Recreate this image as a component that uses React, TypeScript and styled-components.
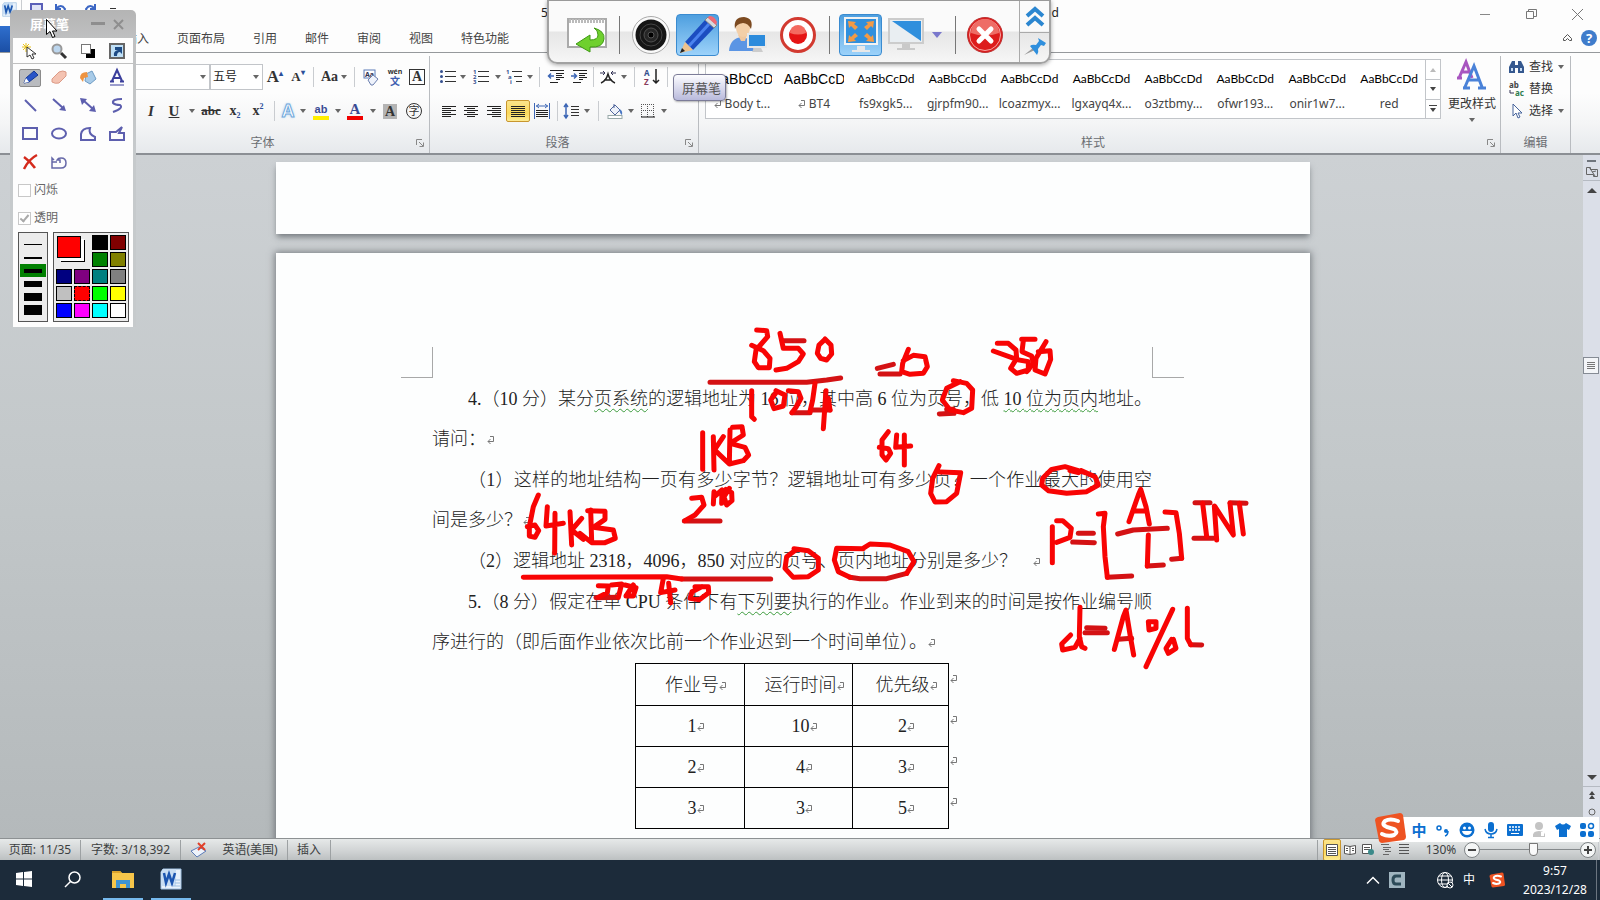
import React from 'react';
import styled, { createGlobalStyle, css } from 'styled-components';

const Global = createGlobalStyle`
  *, *::before, *::after { box-sizing: border-box; }
  body { margin: 0; }
  button, input, select { font: inherit; color: inherit; margin: 0; padding: 0; }
  svg { display: block; flex: none; overflow: visible; }
`;

/* ---------- shell ---------- */
const Shell = styled.div`
  position: relative;
  display: flex;
  flex-direction: column;
  height: 100vh;
  overflow: hidden;
  background: #fdfdfd;
  color: #333;
  font: 12px/16px "Noto Sans", "Noto Sans CJK SC", sans-serif;
`;

/* ---------- title bar ---------- */
const TitleBar = styled.header`
  display: grid;
  grid-template-columns: 1fr 518px 1fr;
  align-items: start;
  height: 26px;
  flex: none;
`;
const QuickBar = styled.div`
  display: flex;
  align-items: center;
  height: 18px;
  padding-left: 1px;
`;
const QuickSlot = styled.button<{ $w: number }>`
  display: flex;
  justify-content: center;
  width: ${p => p.$w}px;
  border: 0;
  background: none;
`;
const Title = styled.div`
  display: flex;
  justify-content: space-between;
  padding-top: 5px;
  color: #222;
`;
const WindowButtons = styled.div`
  display: flex;
  justify-content: flex-end;
  padding-top: 4px;
`;
const WinButton = styled.button`
  display: flex;
  align-items: center;
  justify-content: center;
  width: 46px;
  height: 20px;
  border: 0;
  background: none;
`;

/* ---------- ribbon tabs ---------- */
const TabRow = styled.nav`
  display: flex;
  align-items: stretch;
  height: 27px;
  flex: none;
  border-bottom: 1px solid #96999c;
`;
const FileTab = styled.button`
  width: 56px;
  margin-right: 55px;
  border: 0;
  background: linear-gradient(#2f6fce, #1b4fa5);
`;
const Tab = styled.button`
  padding: 0 14px;
  border: 0;
  background: none;
  color: #444;
`;
const TabTail = styled.div`
  display: flex;
  align-items: center;
  gap: 9px;
  margin-left: auto;
  padding: 0 3px 2px 0;
`;
const IconButton = styled.button`
  display: flex;
  align-items: center;
  justify-content: center;
  border: 0;
  background: none;
`;

/* ---------- ribbon ---------- */
const Ribbon = styled.div`
  display: flex;
  height: 102px;
  flex: none;
  padding-top: 3px;
  border-bottom: 2px solid #8b8f94;
  background: linear-gradient(#fdfdfd 40%, #f4f5f6 70%, #e6e9ec);
`;
const Group = styled.section<{ $w?: number }>`
  display: flex;
  flex-direction: column;
  ${p => (p.$w ? `width: ${p.$w}px; flex: none;` : 'flex: 1; min-width: 0;')}
  border-right: 1px solid #b9bcc0;
`;
const GroupBody = styled.div<{ $pad?: number }>`
  flex: 1;
  padding-left: ${p => p.$pad || 0}px;
`;
const GroupFoot = styled.div<{ $launcher?: boolean }>`
  display: flex;
  align-items: center;
  height: 20px;
  padding-right: ${p => (p.$launcher ? 5 : 0)}px;
  color: #6a6d72;
  span { flex: 1; text-align: center; }
`;
const ToolRow = styled.div`
  display: flex;
  align-items: center;
  height: 34px;
  padding-top: 8px;
`;
const Tool = styled.button<{ $w: number; $on?: boolean }>`
  display: flex;
  align-items: center;
  justify-content: center;
  width: ${p => p.$w}px;
  height: 22px;
  border: 0;
  background: none;
  color: #333;
  ${p => p.$on && css`
    border: 1px solid #c8962f;
    border-radius: 2px;
    background: linear-gradient(#fbe48c, #fbd95c 60%, #fdeb94);
  `}
`;
const Split = styled.i<{ $w: number }>`
  width: ${p => p.$w}px;
  height: 20px;
  background: linear-gradient(#c9ccd0, #c9ccd0) center / 1px 100% no-repeat;
`;
const Combo = styled.span<{ $w: number }>`
  display: flex;
  align-items: center;
  width: ${p => p.$w}px;
  height: 26px;
  border: 1px solid #c2c5c9;
  background: #fff;
  select {
    flex: 1;
    min-width: 0;
    padding-left: 2px;
    border: 0;
    background: none;
    appearance: none;
    color: #222;
  }
  svg { margin-right: 3px; }
`;
const Glyph = styled.span<{ $size: number; $sans?: boolean }>`
  font: bold ${p => p.$size}px/20px ${p => (p.$sans ? '"Liberation Sans", sans-serif' : '"Liberation Serif", serif')};
  sup { font-size: 8px; line-height: 0; color: #2b4f9a; vertical-align: 6px; }
  sub { font-size: 8px; line-height: 0; color: #2b4f9a; vertical-align: -3px; }
`;
const ItalicGlyph = styled(Glyph)`font-style: italic;`;
const UnderGlyph = styled(Glyph)`text-decoration: underline;`;
const StrikeGlyph = styled(Glyph)`text-decoration: line-through;`;
const BoxGlyph = styled(Glyph)`
  width: 16px;
  height: 16px;
  line-height: 14px;
  border: 1px solid #333;
`;
const ShadeGlyph = styled(Glyph)`
  width: 14px;
  height: 15px;
  line-height: 15px;
  background: #b4b4b4;
`;
const RingGlyph = styled.span`
  width: 16px;
  height: 16px;
  border: 1px solid #333;
  border-radius: 50%;
  font-size: 11px;
  line-height: 13px;
`;
const GlowGlyph = styled(Glyph)`
  color: #fff;
  -webkit-text-stroke: 1px #6fa8dc;
  text-shadow: 0 0 3px #8fc0ea;
`;
const BarGlyph = styled(Glyph)<{ $bar: string }>`
  width: 16px;
  height: 17px;
  line-height: 12px;
  border-bottom: 4px solid ${p => p.$bar};
  color: #3a4b94;
`;
const Pinyin = styled.span`
  display: flex;
  flex-direction: column;
  align-items: center;
  font: bold 7px/7px "Noto Sans", sans-serif;
  b { font: bold 10px/11px "Noto Sans CJK SC", sans-serif; color: #3f5fb0; }
`;
const Gallery = styled.div`
  display: flex;
  flex: 1;
  min-width: 0;
  height: 60px;
  margin: 3px 3px 0 6px;
  border: 1px solid #c2c5c9;
  background: #fff;
`;
const GalleryItem = styled.button`
  display: flex;
  flex: 1;
  min-width: 0;
  flex-direction: column;
  align-items: center;
  padding-top: 10px;
  gap: 8px;
  border: 0;
  background: none;
`;
const Preview = styled.span<{ $arial?: boolean }>`
  width: 60px;
  white-space: nowrap;
  color: #000;
  font: ${p => (p.$arial ? '14px/18px "Liberation Sans"' : '12px/18px Lato')}, sans-serif;
  ${p => (p.$arial ? 'overflow: hidden;' : 'text-align: center;')}
`;
const StyleName = styled.span`
  display: flex;
  align-items: center;
  gap: 3px;
  color: #444;
`;
const GalleryScroll = styled.div`
  display: grid;
  grid-template-rows: repeat(3, 1fr);
  width: 15px;
  border-left: 1px solid #c2c5c9;
  button + button { border-top: 1px solid #c2c5c9; }
`;
const StylesBody = styled.div`
  display: flex;
  flex: 1;
`;
const ChangeStyles = styled.button`
  display: flex;
  flex-direction: column;
  align-items: center;
  width: 56px;
  padding-top: 4px;
  border: 0;
  background: none;
  gap: 6px;
  white-space: nowrap;
`;
const EditTool = styled.button`
  display: flex;
  align-items: center;
  gap: 5px;
  height: 22px;
  padding-left: 8px;
  border: 0;
  background: none;
`;
const RibbonEnd = styled.div`width: 29px; flex: none;`;

/* ---------- document area ---------- */
const Work = styled.main`
  display: flex;
  flex: 1;
  min-height: 0;
  background: linear-gradient(#cdd1d4, #c3c8ca 45%, #b4b9bb);
`;
const Canvas = styled.div`
  display: flex;
  flex: 1;
  min-width: 0;
  flex-direction: column;
  align-items: center;
  gap: 19px;
  padding: 7px 0 0 3px;
  overflow: hidden;
`;
const Paper = styled.article<{ $tail?: boolean }>`
  position: relative;
  flex: none;
  width: 1034px;
  min-height: ${p => (p.$tail ? 72 : 1200)}px;
  padding: ${p => (p.$tail ? '0' : '94px 158px 0 156px')};
  background: #fdfefe;
  box-shadow: ${p => (p.$tail ? '0 4px 6px -1px' : '0 0 7px 1px')} rgba(60, 66, 72, .6);
`;
const CropMarks = styled.div`
  display: flex;
  justify-content: space-between;
  height: 31px;
  margin: 0 -32px 1px -31px;
`;
const Corner = styled.i<{ $right?: boolean }>`
  width: 32px;
  border: 0 solid #a8a8a8;
  border-bottom-width: 1px;
  ${p => (p.$right ? 'border-left-width: 1px;' : 'border-right-width: 1px;')}
`;
const Para = styled.p`
  margin: 0 0 1px;
  color: #222;
  font: 300 18px/40px "Liberation Serif", "Noto Sans CJK SC", serif;
`;
const Line = styled.span<{ $indent?: boolean; $full?: boolean }>`
  display: block;
  white-space: nowrap;
  padding-left: ${p => (p.$indent ? 36 : 0)}px;
  ${p => p.$full && 'text-align-last: justify;'}
`;
const Wavy = styled.span`
  text-decoration: underline wavy #3c9b3c 1px;
  text-underline-offset: 3px;
`;
const ReturnSvg = styled.svg<{ $gap?: number }>`
  display: inline-block;
  margin-left: ${p => p.$gap || 0}px;
`;
const JobTable = styled.table`
  margin: 0 0 0 203px;
  border-collapse: collapse;
  color: #222;
  font: 300 18px/40px "Liberation Serif", "Noto Sans CJK SC", serif;
  th { font-weight: 300; height: 42px; }
  td { height: 41px; }
  th, td { padding: 0 0 0 12px; border: 1px solid #000; text-align: center; }
  th:nth-child(1) { width: 109px; }
  th:nth-child(2) { width: 108px; }
  th:nth-child(3) { width: 96px; }
`;
const RowEnd = styled.td`
  && { padding: 0 0 14px 1px; border: 0; line-height: 20px; }
`;
const Ink = styled.svg`
  position: absolute;
  left: 0;
  top: 0;
  pointer-events: none;
  fill: none;
  stroke-width: 15;
  stroke-linecap: round;
  stroke-linejoin: round;
`;

/* ---------- scroll bar ---------- */
const ScrollBar = styled.div`
  display: flex;
  flex-direction: column;
  align-items: center;
  width: 17px;
  padding-top: 5px;
  background: #dbdfe8;
`;
const ScrollPart = styled.button<{ $h: number; $line?: boolean }>`
  display: flex;
  align-items: center;
  justify-content: center;
  width: 17px;
  height: ${p => p.$h}px;
  flex: none;
  border: 0;
  border-bottom: ${p => (p.$line ? '1px solid #b5bac2' : '0')};
  background: none;
`;
const Track = styled.div`
  flex: 1;
  width: 17px;
  padding-top: 158px;
`;
const Thumb = styled.button`
  display: flex;
  align-items: center;
  justify-content: center;
  width: 16px;
  height: 17px;
  border: 1px solid #858b94;
  background: #f3f5f8;
`;

/* ---------- status bar ---------- */
const StatusBar = styled.footer`
  display: flex;
  align-items: center;
  height: 22px;
  flex: none;
  border-top: 1px solid #8d9193;
  background: linear-gradient(#e6e9e9, #cfd2d3 60%, #bcc0c1);
  color: #3c3f41;
`;
const StatusItem = styled.button<{ $w: number }>`
  display: flex;
  align-items: center;
  justify-content: center;
  gap: 15px;
  width: ${p => p.$w}px;
  height: 20px;
  border: 0;
  border-right: 1px solid #9da1a3;
  background: none;
  white-space: nowrap;
`;
const StatusRight = styled.div`
  display: flex;
  align-items: center;
  margin-left: auto;
  padding-left: 5px;
  height: 20px;
  border-left: 1px solid #9da1a3;
`;
const ZoomText = styled.span`
  width: 46px;
  text-align: center;
  margin-left: 5px;
`;
const RoundButton = styled.button`
  display: flex;
  align-items: center;
  justify-content: center;
  width: 16px;
  height: 16px;
  border: 1px solid #7e8385;
  border-radius: 50%;
  background: #f4f6f6;
`;
const ZoomRange = styled.input`
  width: 100px;
  height: 16px;
  appearance: none;
  background: linear-gradient(#85898b, #85898b) center / 100% 1px no-repeat;
  &::-webkit-slider-thumb {
    appearance: none;
    width: 9px;
    height: 13px;
    border: 1px solid #777;
    border-radius: 1px 1px 5px 5px;
    background: #fafafa;
  }
`;

/* ---------- task bar ---------- */
const TaskBar = styled.div`
  display: flex;
  height: 40px;
  flex: none;
  background: #1c2b3a;
  color: #fff;
`;
const TaskButton = styled.button<{ $open?: boolean }>`
  display: flex;
  align-items: center;
  justify-content: center;
  width: 40px;
  margin: 0 4px;
  border: 0;
  border-bottom: 2px solid ${p => (p.$open ? '#76b9ed' : 'transparent')};
  background: none;
`;
const SearchButton = styled(TaskButton)`margin-right: 7px;`;
const Tray = styled.div`
  display: flex;
  align-items: center;
  margin-left: auto;
`;
const TrayItem = styled.button<{ $w: number }>`
  display: flex;
  align-items: center;
  justify-content: center;
  width: ${p => p.$w}px;
  height: 40px;
  border: 0;
  background: none;
`;
const Clock = styled.time`
  width: 82px;
  text-align: center;
  line-height: 19px;
`;
const PeekButton = styled.button`
  width: 4px;
  height: 40px;
  border: 0;
  border-left: 1px solid #6b7580;
  background: none;
`;

/* ---------- floating pieces ---------- */
const Palette = styled.aside`
  position: absolute;
  left: 10px;
  top: 10px;
  width: 126px;
  padding: 0 3px;
  border-radius: 5px 5px 0 0;
  background: linear-gradient(#b4b4b4, #bfc0c1 28px, #c6cacc 145px);
`;
const PaletteHead = styled.div`
  display: flex;
  align-items: center;
  height: 28px;
  padding: 0 4px 0 17px;
  color: #fff;
  font-size: 13px;
  font-weight: bold;
  button { width: 21px; height: 20px; }
  span { flex: 1; }
`;
const PaletteBody = styled.div`
  padding: 0 0 5px;
  background: #fdfdfd;
`;
const PenGrid = styled.div<{ $first?: boolean }>`
  display: grid;
  grid-template-columns: repeat(4, 29px);
  grid-auto-rows: ${p => (p.$first ? 25 : 28)}px;
  padding-left: 2px;
  ${p => p.$first && 'border-bottom: 1px solid #c0c0c0;'}
`;
const PenTool = styled.button<{ $on?: boolean }>`
  display: flex;
  align-items: center;
  justify-content: center;
  align-self: center;
  justify-self: center;
  width: 22px;
  height: 18px;
  border: 1px solid ${p => (p.$on ? '#8b8b8b' : 'transparent')};
  border-radius: 2px;
  background: ${p => (p.$on ? '#b9bbbf' : 'none')};
`;
const Check = styled.label`
  display: flex;
  align-items: center;
  gap: 3px;
  height: 28px;
  padding-left: 5px;
  color: #666;
  input {
    width: 13px;
    height: 13px;
    border: 1px solid #c8c8c8;
    appearance: none;
    background: #fff;
  }
  input:checked::after {
    content: '';
    display: block;
    width: 5px;
    height: 9px;
    margin: 0 0 0 3px;
    border: solid #aaa;
    border-width: 0 2px 2px 0;
    transform: rotate(40deg);
  }
`;
const Boxes = styled.div`
  display: flex;
  gap: 5px;
  padding: 0 4px 0 5px;
`;
const Widths = styled.div`
  display: grid;
  flex: none;
  grid-template-rows: repeat(6, 13px);
  width: 30px;
  padding: 5px 1px;
  border: 1px solid #555;
  background: #ececec;
`;
const WidthOption = styled.button<{ $t: number; $on?: boolean }>`
  border: 0;
  background: linear-gradient(#000, #000) center / 18px ${p => p.$t}px no-repeat ${p => (p.$on ? ', #008000' : '')};
`;
const Swatches = styled.div`
  display: grid;
  grid-template-columns: repeat(4, 16px);
  grid-auto-rows: 15px;
  gap: 2px;
  padding: 2px;
  border: 1px solid #555;
  background: #ececec;
`;
const Swatch = styled.button<{ $c: string; $dash?: boolean }>`
  border: 1px ${p => (p.$dash ? 'dashed' : 'solid')} #000;
  background: ${p => p.$c};
`;
const Current = styled.div`
  grid-column: span 2;
  grid-row: span 2;
  width: 24px;
  height: 22px;
  margin: 1px;
  border: 1px solid #000;
  background: #f00;
  box-shadow: 3px 3px 0 #fff, 4px 4px 0 #000;
`;
const Pointer = styled.svg`
  position: absolute;
  left: 46px;
  top: 19px;
`;
const Dock = styled.div`
  position: absolute;
  top: 0;
  left: calc(50% - 253px);
  display: flex;
  width: 504px;
  height: 64px;
  border: 2px solid #a2a2a2;
  border-top: 1px solid #999;
  border-radius: 0 0 10px 10px;
  background: linear-gradient(#fafafa 30px, #e6e6e6 31px, #f6f6f6);
  box-shadow: 0 1px 4px rgba(0, 0, 0, .35);
`;
const DockMain = styled.div`
  display: flex;
  flex: 1;
  align-items: center;
  padding: 7px 0 0 13px;
`;
const DockButton = styled.button<{ $w: number; $on?: boolean }>`
  display: flex;
  align-items: center;
  justify-content: center;
  width: ${p => p.$w}px;
  height: 42px;
  border: 0;
  background: none;
  ${p => p.$on && css`
    border: 1px solid #3a8bd0;
    border-radius: 4px;
    background: linear-gradient(#4e9fdf, #9cd2fa);
  `}
`;
const ScreenButton = styled(DockButton)`gap: 8px;`;
const DockSplit = styled.i<{ $w: number }>`
  width: ${p => p.$w}px;
  height: 38px;
  background: linear-gradient(#777, #777) center / 1px 100% no-repeat;
`;
const DockSide = styled.div`
  display: grid;
  grid-template-rows: 1fr 1fr;
  width: 30px;
  border-left: 1px solid #aaa;
  button + button { border-top: 1px solid #aaa; }
`;
const Tip = styled.div`
  position: absolute;
  left: calc(50% - 127px);
  top: 74px;
  width: 53px;
  height: 27px;
  padding-left: 8px;
  border: 1px solid #7c7c98;
  border-radius: 4px;
  background: linear-gradient(#fdfdff, #b9badc);
  box-shadow: 1px 1px 2px rgba(0, 0, 0, .3);
  color: #555;
  font-size: 13px;
  line-height: 27px;
  white-space: nowrap;
`;
const Ime = styled.div`
  position: absolute;
  right: 1px;
  bottom: 58px;
  display: flex;
  align-items: center;
  height: 25px;
  padding-left: 26px;
  background: #fff;
  color: #0b6fd0;
  font-weight: bold;
  font-size: 15px;
`;
const ImeButton = styled.button`
  display: flex;
  align-items: center;
  justify-content: center;
  width: 24px;
  height: 24px;
  border: 0;
  background: none;
`;
const ImeLogo = styled.svg`
  position: absolute;
  left: -7px;
  top: -5px;
`;

/* ---------- small drawings ---------- */
const Caret = ({ c = '#666' }: { c?: string }) => (
  <svg width="6" height="4" viewBox="0 0 6 4"><path d="M0 0h6L3 4z" fill={c} /></svg>
);
const Launcher = () => (
  <svg width="8" height="8" viewBox="0 0 8 8" fill="none" stroke="#888"><path d="M.5 6V.5H6M3 3l4 4M7.500 3.500v4h-4" /></svg>
);
const Return = ({ gap = 0 }: { gap?: number }) => (
  <ReturnSvg $gap={gap} width="8" height="9" viewBox="0 0 8 9" fill="none" stroke="#777">
    <path d="M3 .5h3.500v5H1M3.500 3 1 5.500 3.500 8" />
  </ReturnSvg>
);
const Lines = ({ rows, color = '#222' }: { rows: [number, number][]; color?: string }) => (
  <svg width="15" height="13" viewBox="0 0 15 13" stroke={color}>
    {rows.map(([a, b], i) => <path key={i} d={`M${a} ${i * 2 + 1.5}H${b}`} />)}
  </svg>
);
const WordLogo = ({ s }: { s: number }) => (
  <svg width={s} height={s} viewBox="0 0 22 22">
    <path d="M3 1h18v20H1V4z" fill="#e9f2fb" stroke="#9dbfe0" />
    <path d="M1 4l2-3h13v17H1z" fill="#c9def3" />
    <path d="M4 5l2 10 3-9 3 9 3-10" fill="none" stroke="#1c56b0" strokeWidth="2.500" />
    <path d="M15 12h5M15 15h5M13 18h7" stroke="#9dbfe0" />
  </svg>
);
const SLogo = ({ s }: { s: number }) => (
  <svg width={s} height={s} viewBox="0 0 32 32">
    <path d="M4 5 26 1q2 0 3 2l3 22q0 2-2 3L8 31q-2 0-3-2L1 8q0-2 3-3z" fill="#ee5322" />
    <path d="M24 9q-8-3-13 0-4 4 2 6l7 2q5 3 0 6-6 2-12-1" fill="none" stroke="#fff" strokeWidth="4" strokeLinecap="round" />
  </svg>
);
const List = ({ marks }: { marks: string[] }) => (
  <svg width="16" height="16" viewBox="0 0 16 16">
    {marks.map((m, i) => (
      <g key={i}>
        {m ? <text x={marks[1] === 'a' ? i * 2 : 0} y={i * 5 + 5} fontSize="6" fontWeight="bold" fill="#35508f">{m}</text>
          : <circle cx="1.500" cy={i * 5 + 2.500} r="1.500" fill="#35508f" />}
        <path d={`M${marks[1] === 'a' ? 6 + i * 2 : 5} ${i * 5 + 2.5}H16`} stroke="#333" />
      </g>
    ))}
  </svg>
);
const Indent = ({ out }: { out?: boolean }) => (
  <svg width="16" height="14" viewBox="0 0 16 14" stroke="#222" fill="none">
    <path d="M2 .5h14M8 3.500h8M8 5.500h6M8 7.500h8M8 9.500h4M2 12.500h8" />
    <path d={out ? 'M6 6H1M3 3.500 0.500 6 3 8.500' : 'M0 6h5M3 3.500 5.500 6 3 8.500'} stroke="#3c66b5" strokeWidth="1.500" />
  </svg>
);

const full: [number, number] = [0, 14];
const short: [number, number] = [0, 9];

const FontGroup = () => (
  <Group $w={321}>
    <GroupBody>
      <ToolRow>
        <Combo $w={101}><select aria-label="字体"><option></option></select><Caret /></Combo>
        <Combo $w={53}><select aria-label="字号"><option>五号</option></select><Caret /></Combo>
        <Tool $w={24}><Glyph $size={17}>A<sup>▴</sup></Glyph></Tool>
        <Tool $w={22}><Glyph $size={13}>A<sup>▾</sup></Glyph></Tool>
        <Split $w={8} />
        <Tool $w={34}><Glyph $size={14}>Aa</Glyph>&nbsp;<Caret /></Tool>
        <Split $w={6} />
        <Tool $w={28}>
          <svg width="17" height="17" viewBox="0 0 17 17">
            <rect x="1" y="1" width="11" height="8" fill="#fff" stroke="#5b7bb8" />
            <text x="2" y="8" fontSize="7" fontWeight="bold" fill="#335">Aa</text>
            <path d="M5 11l5-5 5 4-5 6H8z" fill="#eef2fb" stroke="#6b7fae" />
          </svg>
        </Tool>
        <Tool $w={20}><Pinyin>wén<b>文</b></Pinyin></Tool>
        <Tool $w={24}><BoxGlyph $size={14}>A</BoxGlyph></Tool>
      </ToolRow>
      <ToolRow>
        <Split $w={31} />
        <Tool $w={22}><ItalicGlyph $size={15}>I</ItalicGlyph></Tool>
        <Tool $w={24}><UnderGlyph $size={15}>U</UnderGlyph></Tool>
        <Tool $w={12}><Caret /></Tool>
        <Tool $w={26}><StrikeGlyph $size={13}>abc</StrikeGlyph></Tool>
        <Tool $w={22}><Glyph $size={14}>x<sub>2</sub></Glyph></Tool>
        <Tool $w={24}><Glyph $size={14}>x<sup>2</sup></Glyph></Tool>
        <Split $w={8} />
        <Tool $w={20}><GlowGlyph $size={18} $sans>A</GlowGlyph></Tool>
        <Tool $w={10}><Caret /></Tool>
        <Tool $w={26}><BarGlyph $size={11} $sans $bar="#ffee00">ab</BarGlyph></Tool>
        <Tool $w={8}><Caret /></Tool>
        <Tool $w={26}><BarGlyph $size={15} $bar="#f00000">A</BarGlyph></Tool>
        <Tool $w={10}><Caret /></Tool>
        <Tool $w={24}><ShadeGlyph $size={14}>A</ShadeGlyph></Tool>
        <Tool $w={24}><RingGlyph>字</RingGlyph></Tool>
      </ToolRow>
    </GroupBody>
    <GroupFoot $launcher><span>字体</span><Launcher /></GroupFoot>
  </Group>
);

const ParagraphGroup = () => (
  <Group $w={269}>
    <GroupBody $pad={8}>
      <ToolRow>
        <Tool $w={20}><List marks={['', '', '']} /></Tool>
        <Tool $w={10}><Caret /></Tool>
        <Tool $w={26}><List marks={['1', '2', '3']} /></Tool>
        <Tool $w={8}><Caret /></Tool>
        <Tool $w={24}><List marks={['1', 'a', 'i']} /></Tool>
        <Tool $w={8}><Caret /></Tool>
        <Split $w={10} />
        <Tool $w={24}><Indent out /></Tool>
        <Tool $w={22}><Indent /></Tool>
        <Split $w={6} />
        <Tool $w={24}>
          <svg width="16" height="13" viewBox="0 0 16 13" stroke="#222" fill="none">
            <path d="M1 12Q6 10 8 3q2 7 7 9M4 9h8" strokeWidth="1.500" /><path d="M0 2h5M3 0l2 2-2 2M16 2h-5M13 0l-2 2 2 2" stroke="#335" />
          </svg>
        </Tool>
        <Tool $w={8}><Caret /></Tool>
        <Split $w={12} />
        <Tool $w={22}>
          <svg width="15" height="18" viewBox="0 0 15 18">
            <text x="0" y="8" fontSize="8" fontWeight="bold" fill="#35508f">A</text>
            <text x="0" y="17" fontSize="8" fontWeight="bold" fill="#8a3a5c">Z</text>
            <path d="M12 1v14M9 12l3 3 3-3" stroke="#222" fill="none" strokeWidth="1.500" />
          </svg>
        </Tool>
        <Split $w={10} />
      </ToolRow>
      <ToolRow>
        <Tool $w={22}><Lines rows={[full, short, full, short, full, short]} /></Tool>
        <Tool $w={22}><Lines rows={[full, [3, 11], full, [3, 11], full, [3, 11]]} /></Tool>
        <Tool $w={24}><Lines rows={[full, [5, 14], full, [5, 14], full, [5, 14]]} /></Tool>
        <Tool $w={24} $on><Lines rows={[full, full, full, full, full, full]} /></Tool>
        <Tool $w={24}>
          <svg width="16" height="16" viewBox="0 0 16 16" stroke="#222" fill="none">
            <path d="M2 7.500h12M2 9.500h12M2 11.500h12M2 13.500h12" /><path d="M.5 0v16M15.500 0v16M2 3h12M5 1 2.500 3 5 5M11 1l2.500 2L11 5" stroke="#3c66b5" />
          </svg>
        </Tool>
        <Split $w={6} />
        <Tool $w={22}>
          <svg width="16" height="16" viewBox="0 0 16 16" fill="none">
            <path d="M3 1v14M1 4l2-3 2 3M1 12l2 3 2-3" stroke="#3c66b5" strokeWidth="1.500" /><path d="M8 3.500h8M8 6.500h8M8 9.500h8M8 12.500h8" stroke="#333" />
          </svg>
        </Tool>
        <Tool $w={10}><Caret /></Tool>
        <Split $w={12} />
        <Tool $w={22}>
          <svg width="17" height="16" viewBox="0 0 17 16">
            <path d="M3 7l5-5 5 5-5 5z" fill="#eef2fa" stroke="#51679c" /><path d="M7 5V1" stroke="#51679c" /><path d="M12 6q4 1 3 6-2-1-3-6" fill="#4a78c4" /><rect x="1" y="12.500" width="14" height="3" fill="#fff" stroke="#9aa" />
          </svg>
        </Tool>
        <Tool $w={10}><Caret /></Tool>
        <Tool $w={24}>
          <svg width="14" height="14" viewBox="0 0 14 14" fill="none" stroke="#555" strokeDasharray="1 1">
            <path d="M.5 0v13M6.500 0v13M12.500 0v13M0 .5h13M0 6.500h13" /><path d="M0 13h14" stroke="#111" strokeDasharray="none" />
          </svg>
        </Tool>
        <Tool $w={8}><Caret /></Tool>
      </ToolRow>
    </GroupBody>
    <GroupFoot $launcher><span>段落</span><Launcher /></GroupFoot>
  </Group>
);

const styleItems: { name: string; mark?: boolean }[] = [
  { name: 'Body t...', mark: true }, { name: 'BT4', mark: true }, { name: 'fs9xgk5...' }, { name: 'gjrpfm90...' },
  { name: 'lcoazmyx...' }, { name: 'lgxayq4x...' }, { name: 'o3ztbmy...' }, { name: 'ofwr193...' },
  { name: 'onir1w7...' }, { name: 'red' },
];

const StylesGroup = () => (
  <Group>
    <StylesBody>
      <Gallery>
        {styleItems.map(s => (
          <GalleryItem key={s.name}>
            <Preview $arial={s.mark}>AaBbCcDd</Preview>
            <StyleName>{s.mark && <Return />}{s.name}</StyleName>
          </GalleryItem>
        ))}
        <GalleryScroll>
          <IconButton aria-label="上一行"><svg width="6" height="4"><path d="M0 4h6L3 0z" fill="#bbb" /></svg></IconButton>
          <IconButton aria-label="下一行"><Caret c="#444" /></IconButton>
          <IconButton aria-label="其他"><svg width="8" height="7"><path d="M0 0h8v1H0zM1 3h6L4 7z" fill="#444" /></svg></IconButton>
        </GalleryScroll>
      </Gallery>
      <ChangeStyles>
        <svg width="30" height="30" viewBox="0 0 30 30" fill="none">
          <path d="M2 18 9 2l6 16M4 12h9M0 18h5" stroke="#a855c0" strokeWidth="3" />
          <path d="M8 27 17 6l8 21M12 20h10M6 28h7M21 28h8" stroke="#4a82d8" strokeWidth="3" />
        </svg>
        更改样式
        <Caret />
      </ChangeStyles>
    </StylesBody>
    <GroupFoot $launcher><span>样式</span><Launcher /></GroupFoot>
  </Group>
);

const EditGroup = () => (
  <Group $w={70}>
    <GroupBody>
      <EditTool>
        <svg width="15" height="14" viewBox="0 0 15 14">
          <path d="M3 1h3v4h3V1h3l3 6v6H9V8H6v5H0V7z" fill="#35588f" /><path d="M2 8h2v3H2zM11 8h2v3h-2z" fill="#c8dcf4" />
        </svg>
        查找<Caret />
      </EditTool>
      <EditTool>
        <svg width="15" height="16" viewBox="0 0 15 16">
          <text x="0" y="7" fontSize="8" fontWeight="bold" fill="#444">ab</text><text x="6" y="15" fontSize="8" fontWeight="bold" fill="#2e7d4f">ac</text>
          <path d="M1 9v3h4" stroke="#335" fill="none" />
        </svg>
        替换
      </EditTool>
      <EditTool>
        <svg width="15" height="14" viewBox="0 0 15 14"><path d="M4 0v12l3-3 2 5 2-1-2-4h4z" fill="#fff" stroke="#46649c" /></svg>
        选择<Caret />
      </EditTool>
    </GroupBody>
    <GroupFoot><span>编辑</span></GroupFoot>
  </Group>
);

/* Pen strokes, drawn at three units to the pixel. */
const brightInk = [
  'M1070 30L1100 32 1103 50 1068 90 1063 125 1075 143 1108 143 1110 115 1090 92 1055 76',
  'M1140 40L1150 85 1195 85 1210 102 1195 125 1160 145 1128 150',
  'M1275 58L1257 75 1252 100 1262 115 1280 120 1295 102 1293 75 1275 57',
  'M1525 88L1508 130 1505 155 1530 163 1570 160 1582 140 1575 110 1540 106 1510 122',
  'M1780 93L1850 118M1792 70L1825 70 1848 90 1850 115 1832 145 1850 160 1885 150 1885 125 1848 118',
  'M1865 58L1905 58M1870 62L1866 95 1895 108 1900 130 1880 155',
  'M1938 65L1908 115 1905 150 1935 162 1952 118 1950 92 1915 95',
  'M1680 185L1640 205 1627 240 1650 270 1690 278 1715 265 1718 210 1700 190 1660 182',
  'M1055 212L1055 290 1063 298',
  'M1130 215L1112 240 1122 266 1150 258 1155 225 1128 212',
  'M1165 212L1195 215 1203 235 1188 262 1176 278',
  'M1245 190L1238 240 1230 275M1278 212L1270 326M1285 235L1290 270',
  'M908 338L908 448M940 350L942 450M970 350L942 392',
  'M990 330L988 430M998 322L1026 320 1030 345 990 370 1035 382 1046 405 1030 422 988 432 946 392',
  'M875 535L905 532 912 555 885 585 855 602',
  'M942 515L940 552M945 528L966 510 965 550M988 505L972 530 980 555 996 542 995 518 978 508',
  'M415 525L400 560 388 620 388 648 405 652 416 632 405 615 382 620',
  'M442 560L438 618 490 610M465 580L464 700',
  'M510 575L515 675M545 595L515 630 550 658M572 570L575 665',
  'M563 572L615 574 615 598 580 622 640 630 646 655 615 668 575 668 540 640',
  'M1465 335L1446 360 1446 405 1458 420 1472 400 1465 386 1438 382',
  'M1490 345L1487 382 1532 378M1513 345L1513 435',
  'M1617 437L1598 475 1592 520 1605 546 1640 545 1670 520 1682 458 1620 456',
  'M2010 452L2035 458M2055 458L1995 440 1955 448 1928 475 1925 495 1945 512 2000 520 2060 515 2095 495 2085 470 2045 452',
  'M1957 620L1957 728M1970 602L1988 602 2014 625 2010 652 1970 667',
  'M2095 582L2115 580 2110 620 2115 710 2122 772',
  'M2187 605L2215 525 2222 508 2238 560 2248 612M2198 573L2235 573',
  'M2245 645L2242 738M2295 576L2328 578 2338 640 2345 715',
  'M2408 550L2420 650M2443 558L2450 660M2445 560L2500 645 2490 550M2518 550L2530 642',
  'M2040 862L2038 950 2045 980 2055 985M2012 945L1985 972 1988 990 2025 982 2040 955',
  'M2143 988L2170 890 2178 870 2192 955 2201 1005',
  'M2268 905L2245 905 2247 930 2268 925 2268 905M2318 868L2275 960 2238 1040M2315 958L2298 985 2305 1000 2328 985 2320 958',
  'M2362 865L2362 955 2372 974',
  'M370 772L800 770 845 777',
  'M595 797L625 798 622 818 595 832M635 795L665 792 655 832M675 795L708 803 700 828 678 828 700 795',
  'M790 775L782 818 825 810M806 790L812 848',
  'M905 800L876 815 870 835 898 839 926 818 925 800 885 800',
  'M1190 688L1160 710 1155 745 1180 772 1225 770 1255 750 1255 715 1225 692 1182 686',
  'M1390 686L1310 685 1303 720 1315 755 1350 772M1520 760L1542 725 1525 695 1470 675 1410 672 1388 686',
];
const darkInk = [
  'M930 187L1220 187 1280 180 1322 174', 'M1148 62L1212 62', 'M1432 145L1480 133', 'M1440 162L1500 162',
  'M1618 282L1662 280 1660 268 1640 268', 'M1176 278L1230 278M1240 270L1290 270', 'M853 603L960 603', 'M2035 640L2080 640',
  'M2018 666L2083 668', 'M2122 772L2195 768', 'M2153 642L2200 630 2302 625', 'M2242 738L2290 735', 'M2345 715L2315 718',
  'M2385 548L2430 548', 'M2382 655L2440 655', 'M2490 548L2538 550', 'M2060 923L2115 925', 'M2055 938L2122 938',
  'M2155 958L2195 955', 'M2372 974L2405 975', 'M845 777L1112 777', 'M588 833L650 832', 'M1350 772L1380 776 1460 776 1520 760',
];

const InkLayer = () => (
  <Ink width="1034" height="585" viewBox="-372 -201 3102 1755">
    <g stroke="#d41214">{darkInk.map(d => <path key={d} d={d} />)}</g>
    <g stroke="#f80404">{brightInk.map(d => <path key={d} d={d} />)}</g>
  </Ink>
);

const jobs = [['1', '10', '2'], ['2', '4', '3'], ['3', '3', '5']];

const DocumentPage = () => (
  <Paper lang="zh-CN">
    <CropMarks><Corner /><Corner $right /></CropMarks>
    <Para>
      <Line $indent $full>4.（10 分）某分<Wavy>页系统</Wavy>的逻辑地址为 16 位，其中高 6 位为页号，低 <Wavy>10 位为页内</Wavy>地址。</Line>
      <Line>请问：<Return gap={1} /></Line>
    </Para>
    <Para>
      <Line $indent $full>（1）这样的地址结构一页有多少字节？逻辑地址可有多少页？一个作业最大的使用空</Line>
      <Line>间是多少？<Return gap={1} /></Line>
    </Para>
    <Para>
      <Line $indent>（2）逻辑地址 2318，4096，850 对应的页号、页内地址分别是多少？<Return gap={16} /></Line>
    </Para>
    <Para>
      <Line $indent $full>5.（8 分）假定在单 CPU 条件下有<Wavy>下列要</Wavy>执行的作业。作业到来的时间是按作业编号顺</Line>
      <Line>序进行的（即后面作业依次比前一个作业迟到一个时间单位）。<Return gap={1} /></Line>
    </Para>
    <JobTable>
      <thead>
        <tr>
          {['作业号', '运行时间', '优先级'].map(h => <th key={h} scope="col">{h}<Return /></th>)}
          <RowEnd><Return /></RowEnd>
        </tr>
      </thead>
      <tbody>
        {jobs.map(r => (
          <tr key={r[0]}>
            {r.map((v, i) => <td key={i}>{v}<Return /></td>)}
            <RowEnd><Return /></RowEnd>
          </tr>
        ))}
      </tbody>
    </JobTable>
    <InkLayer />
  </Paper>
);

const b = '#5d5fae';
const penIcons: [string, React.ReactNode][] = [
  ['画笔', <g><path d="M3 13l2-5 8-7 4 4-9 7z" fill="#2a55c8" stroke="#173a94" /><path d="M3 13l2-5 3 4z" fill="#fff" /></g>],
  ['橡皮', <path d="M2 9 9 2q4-2 7 0v4l-7 7q-4 1-7-1z" fill="#f4c3b2" stroke="#dc9a86" />],
  ['填充', <g><path d="M7 4l6-3 4 8-6 5-5-3z" fill="#a8cbe8" stroke="#6f9cc4" /><path d="M1 8q0-6 7-6l1 5-4 1-1 4z" fill="#ee9340" /></g>],
  ['文字', <g><path d="M4 11 9 0l5 11M6 8h6M2 11.500h4M12 11.500h4" fill="none" stroke="#3b3f9c" strokeWidth="2" /><path d="M2 15h14" stroke="#3b3f9c" /></g>],
  ['直线', <path d="M4 2l11 11" stroke={b} strokeWidth="2" />],
  ['箭头', <g><path d="M3 1l10 9" stroke={b} strokeWidth="2" /><path d="M16 13l-7-1 5-5z" fill={b} /></g>],
  ['双箭头', <g><path d="M5 3l9 8" stroke={b} strokeWidth="2" /><path d="M17 14l-7-1 5-6zM1 0l7 1-5 6z" fill={b} /></g>],
  ['曲线', <path d="M14 1Q4 1 5 5q2 2 7 2 4 3-7 7" fill="none" stroke={b} strokeWidth="2" />],
  ['矩形', <rect x="2" y="2" width="14" height="11" fill="none" stroke={b} strokeWidth="2" />],
  ['椭圆', <ellipse cx="9" cy="7.500" rx="7" ry="5" fill="none" stroke={b} strokeWidth="2" />],
  ['曲边形', <path d="M2 14V8q1-6 9-6-2 6 5 9v3z" fill="none" stroke={b} strokeWidth="2" />],
  ['多边形', <path d="M2 14V6h6l6-5-3 6h5v7z" fill="none" stroke={b} strokeWidth="2" />],
  ['清除', <path d="M3 3q7 5 11 11M16 1Q8 5 3 15" fill="none" stroke="#d42a1c" strokeWidth="2.500" />],
  ['撤销', <path d="M7 8H2v6h9q5 0 5-5t-5-5q-3 0-4 2l3 0v3M2 8V4l2 2" fill="none" stroke="#6668a8" strokeWidth="1.500" />],
];

const swatchColors = ['#000', '#800000', '#008000', '#808000', '#000080', '#800080', '#008080', '#808080',
  '#c0c0c0', '#ff0000', '#00ff00', '#ffff00', '#0000ff', '#ff00ff', '#00ffff', '#ffffff'];

const PenPalette = () => (
  <Palette>
    <PaletteHead>
      <span>屏幕笔</span>
      <IconButton aria-label="最小化"><svg width="14" height="4"><path d="M0 0h14v3H0z" fill="#8e8e8e" /></svg></IconButton>
      <IconButton aria-label="关闭"><svg width="11" height="11"><path d="M1 1l9 9M10 1l-9 9" stroke="#8e8e8e" strokeWidth="2" /></svg></IconButton>
    </PaletteHead>
    <PaletteBody>
      <PenGrid $first>
        <PenTool aria-label="选择">
          <svg width="16" height="16" viewBox="0 0 16 16"><path d="M4 0v9M0 4h9M1 1l6 6M7 1 1 7" stroke="#e8c31c" /><path d="M5 4v10l3-2 2 4 2-1-2-4h4z" fill="#fff" stroke="#333" /></svg>
        </PenTool>
        <PenTool aria-label="放大镜">
          <svg width="16" height="16" viewBox="0 0 16 16"><circle cx="6" cy="6" r="4.500" fill="#bcd6ee" stroke="#999" strokeWidth="2" /><path d="M10 10l5 5" stroke="#333" strokeWidth="3" /></svg>
        </PenTool>
        <PenTool aria-label="前后景">
          <svg width="16" height="16" viewBox="0 0 16 16"><rect x="6" y="6" width="9" height="9" fill="#000" /><rect x="1.500" y="1.500" width="9" height="9" fill="#fff" stroke="#777" /></svg>
        </PenTool>
        <PenTool aria-label="桌面">
          <svg width="16" height="16" viewBox="0 0 16 16"><rect x="1" y="1" width="14" height="14" fill="#bfe0f7" stroke="#666" strokeWidth="2" /><path d="M5 13q-1-5 4-6H6V4h7v7l-2-2q-3 0-3 4z" fill="#1d4b86" /></svg>
        </PenTool>
      </PenGrid>
      <PenGrid>
        {penIcons.map(([label, art], i) => (
          <PenTool key={label} aria-label={label} $on={i === 0}><svg width="18" height="16" viewBox="0 0 18 16">{art}</svg></PenTool>
        ))}
      </PenGrid>
      <Check><input type="checkbox" />闪烁</Check>
      <Check><input type="checkbox" defaultChecked />透明</Check>
      <Boxes>
        <Widths>
          {[1, 2, 4, 6, 8, 10].map(t => <WidthOption key={t} $t={t} $on={t === 4} aria-label={`线宽 ${t}`} />)}
        </Widths>
        <Swatches>
          <Current />
          {swatchColors.map(c => <Swatch key={c} $c={c} $dash={c === '#ff0000'} aria-label={c} />)}
        </Swatches>
      </Boxes>
    </PaletteBody>
  </Palette>
);

const Recorder = () => (
  <Dock>
    <DockMain>
      <DockButton $w={50} aria-label="返回">
        <svg width="42" height="36" viewBox="0 0 42 36">
          <rect x="2" y="2" width="38" height="28" fill="#fff" stroke="#aaa" strokeWidth="2" />
          <path d="M3 4h36" stroke="#bbb" strokeWidth="4" strokeDasharray="2 1" />
          <path d="M10 27 24 18v5q8 0 8-5 0-5-4-7 11 3 10 11-1 9-14 8v5z" fill="#6fd02e" stroke="#3f9a14" />
        </svg>
      </DockButton>
      <DockSplit $w={14} />
      <DockButton $w={50} aria-label="声音">
        <svg width="40" height="40" viewBox="0 0 40 40">
          <circle cx="20" cy="20" r="18.500" fill="#fafafa" stroke="#aaa" /><circle cx="20" cy="20" r="15.500" fill="#161616" />
          <circle cx="20" cy="20" r="11" fill="none" stroke="#444" /><circle cx="20" cy="20" r="7" fill="#262626" stroke="#505050" /><circle cx="20" cy="20" r="3" fill="#000" stroke="#555" />
        </svg>
      </DockButton>
      <DockButton $w={43} $on aria-label="屏幕笔">
        <svg width="40" height="40" viewBox="0 0 40 40">
          <path d="M7 27 27 5l9 8-21 22z" fill="#1c4dc0" /><path d="M11 31 31 9" stroke="#4b83ee" strokeWidth="3" /><path d="M2 38l5-11 8 8z" fill="#edc28e" /><path d="M2 38l2-5 3 3z" fill="#222" />
          <path d="M27 5l3-3 9 8-3 3z" fill="#d5d9de" stroke="#888" /><path d="M31 1q5-1 8 6l-1 3-8-7z" fill="#ee6a74" />
        </svg>
      </DockButton>
      <DockButton $w={58} aria-label="讲师">
        <svg width="38" height="38" viewBox="0 0 38 38">
          <path d="M0 35q1-13 13-14 10 1 12 14z" fill="#5b95e4" /><path d="M9 19h9l-2 6h-4z" fill="#f0c8a0" /><ellipse cx="14" cy="12" rx="7" ry="9" fill="#f3cfa8" /><path d="M6 13Q4 1 15 1q10 1 7 12-3-6-8-6-7 1-8 6z" fill="#7c4a20" />
          <rect x="19" y="18" width="18" height="13" fill="#2c8bdc" stroke="#e8e8e8" strokeWidth="2" /><path d="M25 32h7l2 4H23z" fill="#ccc" />
        </svg>
      </DockButton>
      <DockButton $w={42} aria-label="录制">
        <svg width="38" height="38" viewBox="0 0 38 38"><circle cx="19" cy="19" r="16.500" fill="#fff" stroke="#d23a30" strokeWidth="3" /><circle cx="19" cy="19" r="9" fill="#e51414" /><path d="M11 17a8 8 0 0 1 16 0q-8 3-16 0" fill="#f46a60" /></svg>
      </DockButton>
      <DockSplit $w={20} />
      <DockButton $w={43} $on aria-label="全屏">
        <svg width="36" height="38" viewBox="0 0 36 38">
          <rect x="2" y="2" width="32" height="26" fill="#2f8fdd" stroke="#f3f3f3" strokeWidth="2" />
          <path d="M5 5l8 1-2 2 4 3-3 3-4-4-2 2zM31 5l-8 1 2 2-4 3 3 3 4-4 2 2zM5 26l8-1-2-2 4-3-3-3-4 4-2-2zM31 26l-8-1 2-2-4-3 3-3 4 4 2-2z" fill="#f39a45" />
          <path d="M14 30h8v4h5v2H9v-2h5z" fill="#e8e8e8" />
        </svg>
      </DockButton>
      <ScreenButton $w={66} aria-label="屏幕">
        <svg width="36" height="36" viewBox="0 0 36 36">
          <rect x="1" y="2" width="34" height="24" fill="#e9eef2" stroke="#ccc" strokeWidth="2" /><path d="M4 4h29v20z" fill="#2f8fdd" /><path d="M14 27h8v4h5v2H9v-2h5z" fill="#c9c9c9" />
        </svg>
        <svg width="10" height="6"><path d="M0 0h10L5 6z" fill="#7a78cc" /></svg>
      </ScreenButton>
      <DockSplit $w={14} />
      <DockButton $w={46} aria-label="停止">
        <svg width="38" height="38" viewBox="0 0 38 38"><circle cx="19" cy="19" r="17.500" fill="#dd1c1c" stroke="#b33" /><circle cx="19" cy="19" r="15.500" fill="none" stroke="#f5a9a4" /><path d="M5 17a14 14 0 0 1 28 0q-14 5-28 0" fill="#ee6d66" /><path d="M13 13l12 12M25 13 13 25" stroke="#fff" strokeWidth="5" strokeLinecap="round" /></svg>
      </DockButton>
    </DockMain>
    <DockSide>
      <IconButton aria-label="收起"><svg width="18" height="20" viewBox="0 0 18 20" fill="none" stroke="#2b86d0" strokeWidth="4"><path d="M1 10l8-7 8 7M1 19l8-7 8 7" /></svg></IconButton>
      <IconButton aria-label="固定"><svg width="22" height="18" viewBox="0 0 22 18"><path d="M0 17l9-7 2 2z" fill="#999" /><path d="M14 0l8 5-2 3-3-1-3 4q1 3-1 6L6 8q2-2 6-1l3-4z" fill="#2f8fdd" /></svg></IconButton>
    </DockSide>
  </Dock>
);

const blue = '#0b6fd0';

export default function App() {
  return (
    <Shell>
      <Global />
      <TitleBar>
        <QuickBar>
          <QuickSlot $w={16} aria-label="Word"><WordLogo s={15} /></QuickSlot>
          <Split $w={8} />
          <QuickSlot $w={22} aria-label="保存"><svg width="13" height="13"><path d="M1 1h11v11H1z" fill="#dfe3f6" stroke="#5a5fb8" strokeWidth="2" /></svg></QuickSlot>
          <QuickSlot $w={26} aria-label="撤销"><svg width="13" height="12"><path d="M2 6q5-6 9 0-1 4-5 5M2 1v5h5" fill="none" stroke="#3b66c4" strokeWidth="2" /></svg></QuickSlot>
          <QuickSlot $w={34} aria-label="恢复"><svg width="13" height="12"><path d="M11 6Q6 0 2 6q1 4 5 5M11 1v5H6" fill="none" stroke="#3b66c4" strokeWidth="2" /></svg></QuickSlot>
          <QuickSlot $w={12} aria-label="自定义快速访问工具栏"><svg width="6" height="2"><path d="M0 0h6v1H0z" fill="#333" /></svg></QuickSlot>
        </QuickBar>
        <Title><span>5</span><span>d</span></Title>
        <WindowButtons>
          <WinButton aria-label="最小化"><svg width="10" height="1"><path d="M0 .5h10" stroke="#888" /></svg></WinButton>
          <WinButton aria-label="还原"><svg width="11" height="10" fill="none" stroke="#777"><path d="M.5 2.500h7v7h-7zM2.500 2.500v-2h8v7h-3" /></svg></WinButton>
          <WinButton aria-label="关闭"><svg width="11" height="11" stroke="#777"><path d="M0 0l11 11M11 0 0 11" /></svg></WinButton>
        </WindowButtons>
      </TitleBar>
      <TabRow>
        <FileTab aria-label="文件" />
        {['插入', '页面布局', '引用', '邮件', '审阅', '视图', '特色功能'].map(t => <Tab key={t}>{t}</Tab>)}
        <TabTail>
          <IconButton aria-label="折叠功能区"><svg width="9" height="8" fill="none" stroke="#555"><path d="M.5 4.500l4-4 4 4M.5 4.500v2h2l2-2 2 2h2v-2" /></svg></IconButton>
          <IconButton aria-label="帮助">
            <svg width="16" height="16" viewBox="0 0 16 16"><circle cx="8" cy="8" r="8" fill="#3f7ccb" /><text x="8" y="13" fontSize="13" fontWeight="bold" fill="#fff" textAnchor="middle">?</text></svg>
          </IconButton>
        </TabTail>
      </TabRow>
      <Ribbon>
        <Group $w={109} aria-label="剪贴板" />
        <FontGroup />
        <ParagraphGroup />
        <StylesGroup />
        <EditGroup />
        <RibbonEnd />
      </Ribbon>
      <Work>
        <Canvas>
          <Paper $tail />
          <DocumentPage />
        </Canvas>
        <ScrollBar>
          <svg width="9" height="2"><path d="M0 0h9v2H0z" fill="#6f757d" /></svg>
          <ScrollPart $h={19} $line aria-label="标尺">
            <svg width="12" height="11" fill="none" stroke="#666"><path d="M.5 1.500h4v2h7v7h-4v-2h-7zM3 1l6 9M6 6l4-1" /></svg>
          </ScrollPart>
          <ScrollPart $h={18} aria-label="向上"><svg width="10" height="5"><path d="M0 5h10L5 0z" fill="#444" /></svg></ScrollPart>
          <Track>
            <Thumb aria-label="滚动"><svg width="8" height="8" stroke="#777"><path d="M0 .5h8M0 2.500h8M0 4.500h8M0 6.500h8" /></svg></Thumb>
          </Track>
          <ScrollPart $h={18} $line aria-label="向下"><svg width="10" height="5"><path d="M0 0h10L5 5z" fill="#444" /></svg></ScrollPart>
          <ScrollPart $h={16} aria-label="前一页"><svg width="6" height="8"><path d="M0 4h6L3 0zM0 8h6L3 4z" fill="#444" /></svg></ScrollPart>
          <ScrollPart $h={18} aria-label="浏览对象"><svg width="8" height="8"><circle cx="4" cy="4" r="3" fill="none" stroke="#666" /></svg></ScrollPart>
          <ScrollPart $h={17} aria-label="下一页" />
        </ScrollBar>
      </Work>
      <StatusBar>
        <StatusItem $w={81}>页面: 11/35</StatusItem>
        <StatusItem $w={100}>字数: 3/18,392</StatusItem>
        <StatusItem $w={107}>
          <svg width="17" height="16" viewBox="0 0 17 16"><path d="M1 9l8-4 7 4-9 6z" fill="#eef3fb" stroke="#5b7bb8" /><path d="M8 1l7 7M15 1 8 8" stroke="#e0402a" strokeWidth="2" /></svg>
          英语(美国)
        </StatusItem>
        <StatusItem $w={43}>插入</StatusItem>
        <StatusRight>
          <Tool $w={18} $on aria-label="页面视图"><svg width="12" height="12" viewBox="0 0 12 12"><path d="M.5.5h11v11H.5z" fill="#fff" stroke="#555" /><path d="M2 3.500h8M2 5.500h8M2 7.500h8M2 9.500h8" stroke="#555" /></svg></Tool>
          <Tool $w={18} aria-label="阅读版式"><svg width="12" height="11" fill="#fff" stroke="#555"><path d="M.5 1.500 6 2.500l5.500-1v8L6 10.500.5 9.500zM6 2v8M2 4.500h2M2 6.500h2M8 4.500h2M8 6.500h2" /></svg></Tool>
          <Tool $w={18} aria-label="Web 版式"><svg width="13" height="12"><path d="M.5.5h9v9h-9zM2 3.500h6M2 5.500h6" fill="#fff" stroke="#555" /><circle cx="9" cy="8" r="3" fill="#3b8a8a" /></svg></Tool>
          <Tool $w={18} aria-label="大纲"><svg width="10" height="11" stroke="#666"><path d="M0 .5h8M2 3.500h8M2 5.500h6M4 7.500h6M2 10.500h6" /></svg></Tool>
          <Tool $w={18} aria-label="草稿"><svg width="10" height="11" stroke="#555"><path d="M0 .5h10M0 3.500h10M0 6.500h10M0 9.500h10" /></svg></Tool>
          <ZoomText>130%</ZoomText>
          <RoundButton aria-label="缩小"><svg width="8" height="2"><path d="M0 0h8v2H0z" fill="#444" /></svg></RoundButton>
          <ZoomRange type="range" aria-label="显示比例" min={0} max={100} defaultValue={54} />
          <RoundButton aria-label="放大"><svg width="8" height="8"><path d="M3 0h2v3h3v2H5v3H3V5H0V3h3z" fill="#444" /></svg></RoundButton>
          <Split $w={4} />
        </StatusRight>
      </StatusBar>
      <TaskBar>
        <TaskButton aria-label="开始"><svg width="16" height="16" viewBox="0 0 16 16"><path d="M0 2l7-1v6.500H0zM8 1l8-1v7.500H8zM0 8.500h7V15l-7-1zM8 8.500h8V16l-8-1z" fill="#fff" /></svg></TaskButton>
        <SearchButton aria-label="搜索"><svg width="17" height="17" viewBox="0 0 17 17" fill="none" stroke="#fff" strokeWidth="1.500"><circle cx="10.500" cy="6.500" r="5.500" /><path d="M6.500 10.500 1 16" /></svg></SearchButton>
        <TaskButton $open aria-label="文件资源管理器"><svg width="22" height="19" viewBox="0 0 22 19"><path d="M0 1h8l2 2h12v15H0z" fill="#f7c64a" /><path d="M0 1h8l2 2H0z" fill="#dba32c" /><path d="M4 18v-8h14v8h-4v-4H8v4z" fill="#3f94d4" /></svg></TaskButton>
        <TaskButton $open aria-label="Word"><WordLogo s={22} /></TaskButton>
        <Tray>
          <TrayItem $w={24} aria-label="显示隐藏的图标"><svg width="12" height="7" fill="none" stroke="#fff" strokeWidth="1.500"><path d="M0 6.500 6 .5l6 6" /></svg></TrayItem>
          <TrayItem $w={24} aria-label="录屏"><svg width="16" height="16"><rect width="16" height="16" fill="#9fb4bf" /><path d="M12 4H7Q4 4 4 8t3 4h5" fill="none" stroke="#2c4a58" strokeWidth="3" /></svg></TrayItem>
          <TrayItem $w={23} aria-label="托盘" />
          <TrayItem $w={26} aria-label="网络">
            <svg width="17" height="17" viewBox="0 0 17 17" fill="none" stroke="#fff"><circle cx="8" cy="8" r="7.500" /><ellipse cx="8" cy="8" rx="3.500" ry="7.500" /><path d="M.5 8h15M2 4h12M2 12h8" /><circle cx="13" cy="13" r="3" fill="#1c2b3a" /><path d="M11 11l4 4" /></svg>
          </TrayItem>
          <TrayItem $w={22}>中</TrayItem>
          <TrayItem $w={34} aria-label="搜狗输入法"><SLogo s={16} /></TrayItem>
          <Clock>9:57<br />2023/12/28</Clock>
          <PeekButton aria-label="显示桌面" />
        </Tray>
      </TaskBar>
      <PenPalette />
      <Pointer width="12" height="19" viewBox="0 0 12 19"><path d="M.5 .5v15l3.500-3 2.500 6 2.500-1-2.500-5.500H11z" fill="#fff" stroke="#000" /></Pointer>
      <Recorder />
      <Tip role="tooltip">屏幕笔</Tip>
      <Ime>
        <ImeLogo width="32" height="32"><SLogo s={32} /></ImeLogo>
        <ImeButton>中</ImeButton>
        <ImeButton aria-label="标点"><svg width="14" height="12"><circle cx="3" cy="4" r="2" fill="none" stroke={blue} strokeWidth="1.500" /><circle cx="10" cy="7" r="2" fill={blue} /><path d="M12 7q0 4-3 5" stroke={blue} fill="none" strokeWidth="1.500" /></svg></ImeButton>
        <ImeButton aria-label="表情"><svg width="16" height="16"><circle cx="8" cy="8" r="7.500" fill={blue} /><circle cx="5.500" cy="6" r="1.500" fill="#fff" /><circle cx="10.500" cy="6" r="1.500" fill="#fff" /><path d="M3 9h10q-1 4-5 4T3 9" fill="#fff" /></svg></ImeButton>
        <ImeButton aria-label="语音"><svg width="14" height="16"><rect x="4" width="6" height="10" rx="3" fill={blue} /><path d="M1 7q1 5 6 5t6-5M7 12v3M4 15.500h6" fill="none" stroke={blue} strokeWidth="1.500" /></svg></ImeButton>
        <ImeButton aria-label="键盘"><svg width="16" height="12"><rect width="16" height="12" rx="1" fill={blue} /><path d="M2 3h12M2 6h12" stroke="#fff" strokeWidth="1.500" strokeDasharray="2 1" /><path d="M4 9.500h8" stroke="#fff" /></svg></ImeButton>
        <ImeButton aria-label="用户"><svg width="14" height="15"><circle cx="7" cy="4" r="4" fill="#c4c4c4" /><path d="M1 15q-1-6 6-6t6 6z" fill="#c4c4c4" /><rect x="9" y="10" width="3" height="4" fill="#fff" /></svg></ImeButton>
        <ImeButton aria-label="皮肤"><svg width="16" height="14"><path d="M5 0q3 3 6 0l5 3-2 4-2-1v8H4V6L2 7 0 3z" fill={blue} /></svg></ImeButton>
        <ImeButton aria-label="工具箱"><svg width="14" height="14" fill={blue}><rect width="6" height="6" rx="2" /><circle cx="11" cy="3" r="2.500" fill="none" stroke={blue} strokeWidth="1.500" /><rect y="8" width="6" height="6" rx="2" /><rect x="8" y="8" width="6" height="6" rx="2" /></svg></ImeButton>
      </Ime>
    </Shell>
  );
}
